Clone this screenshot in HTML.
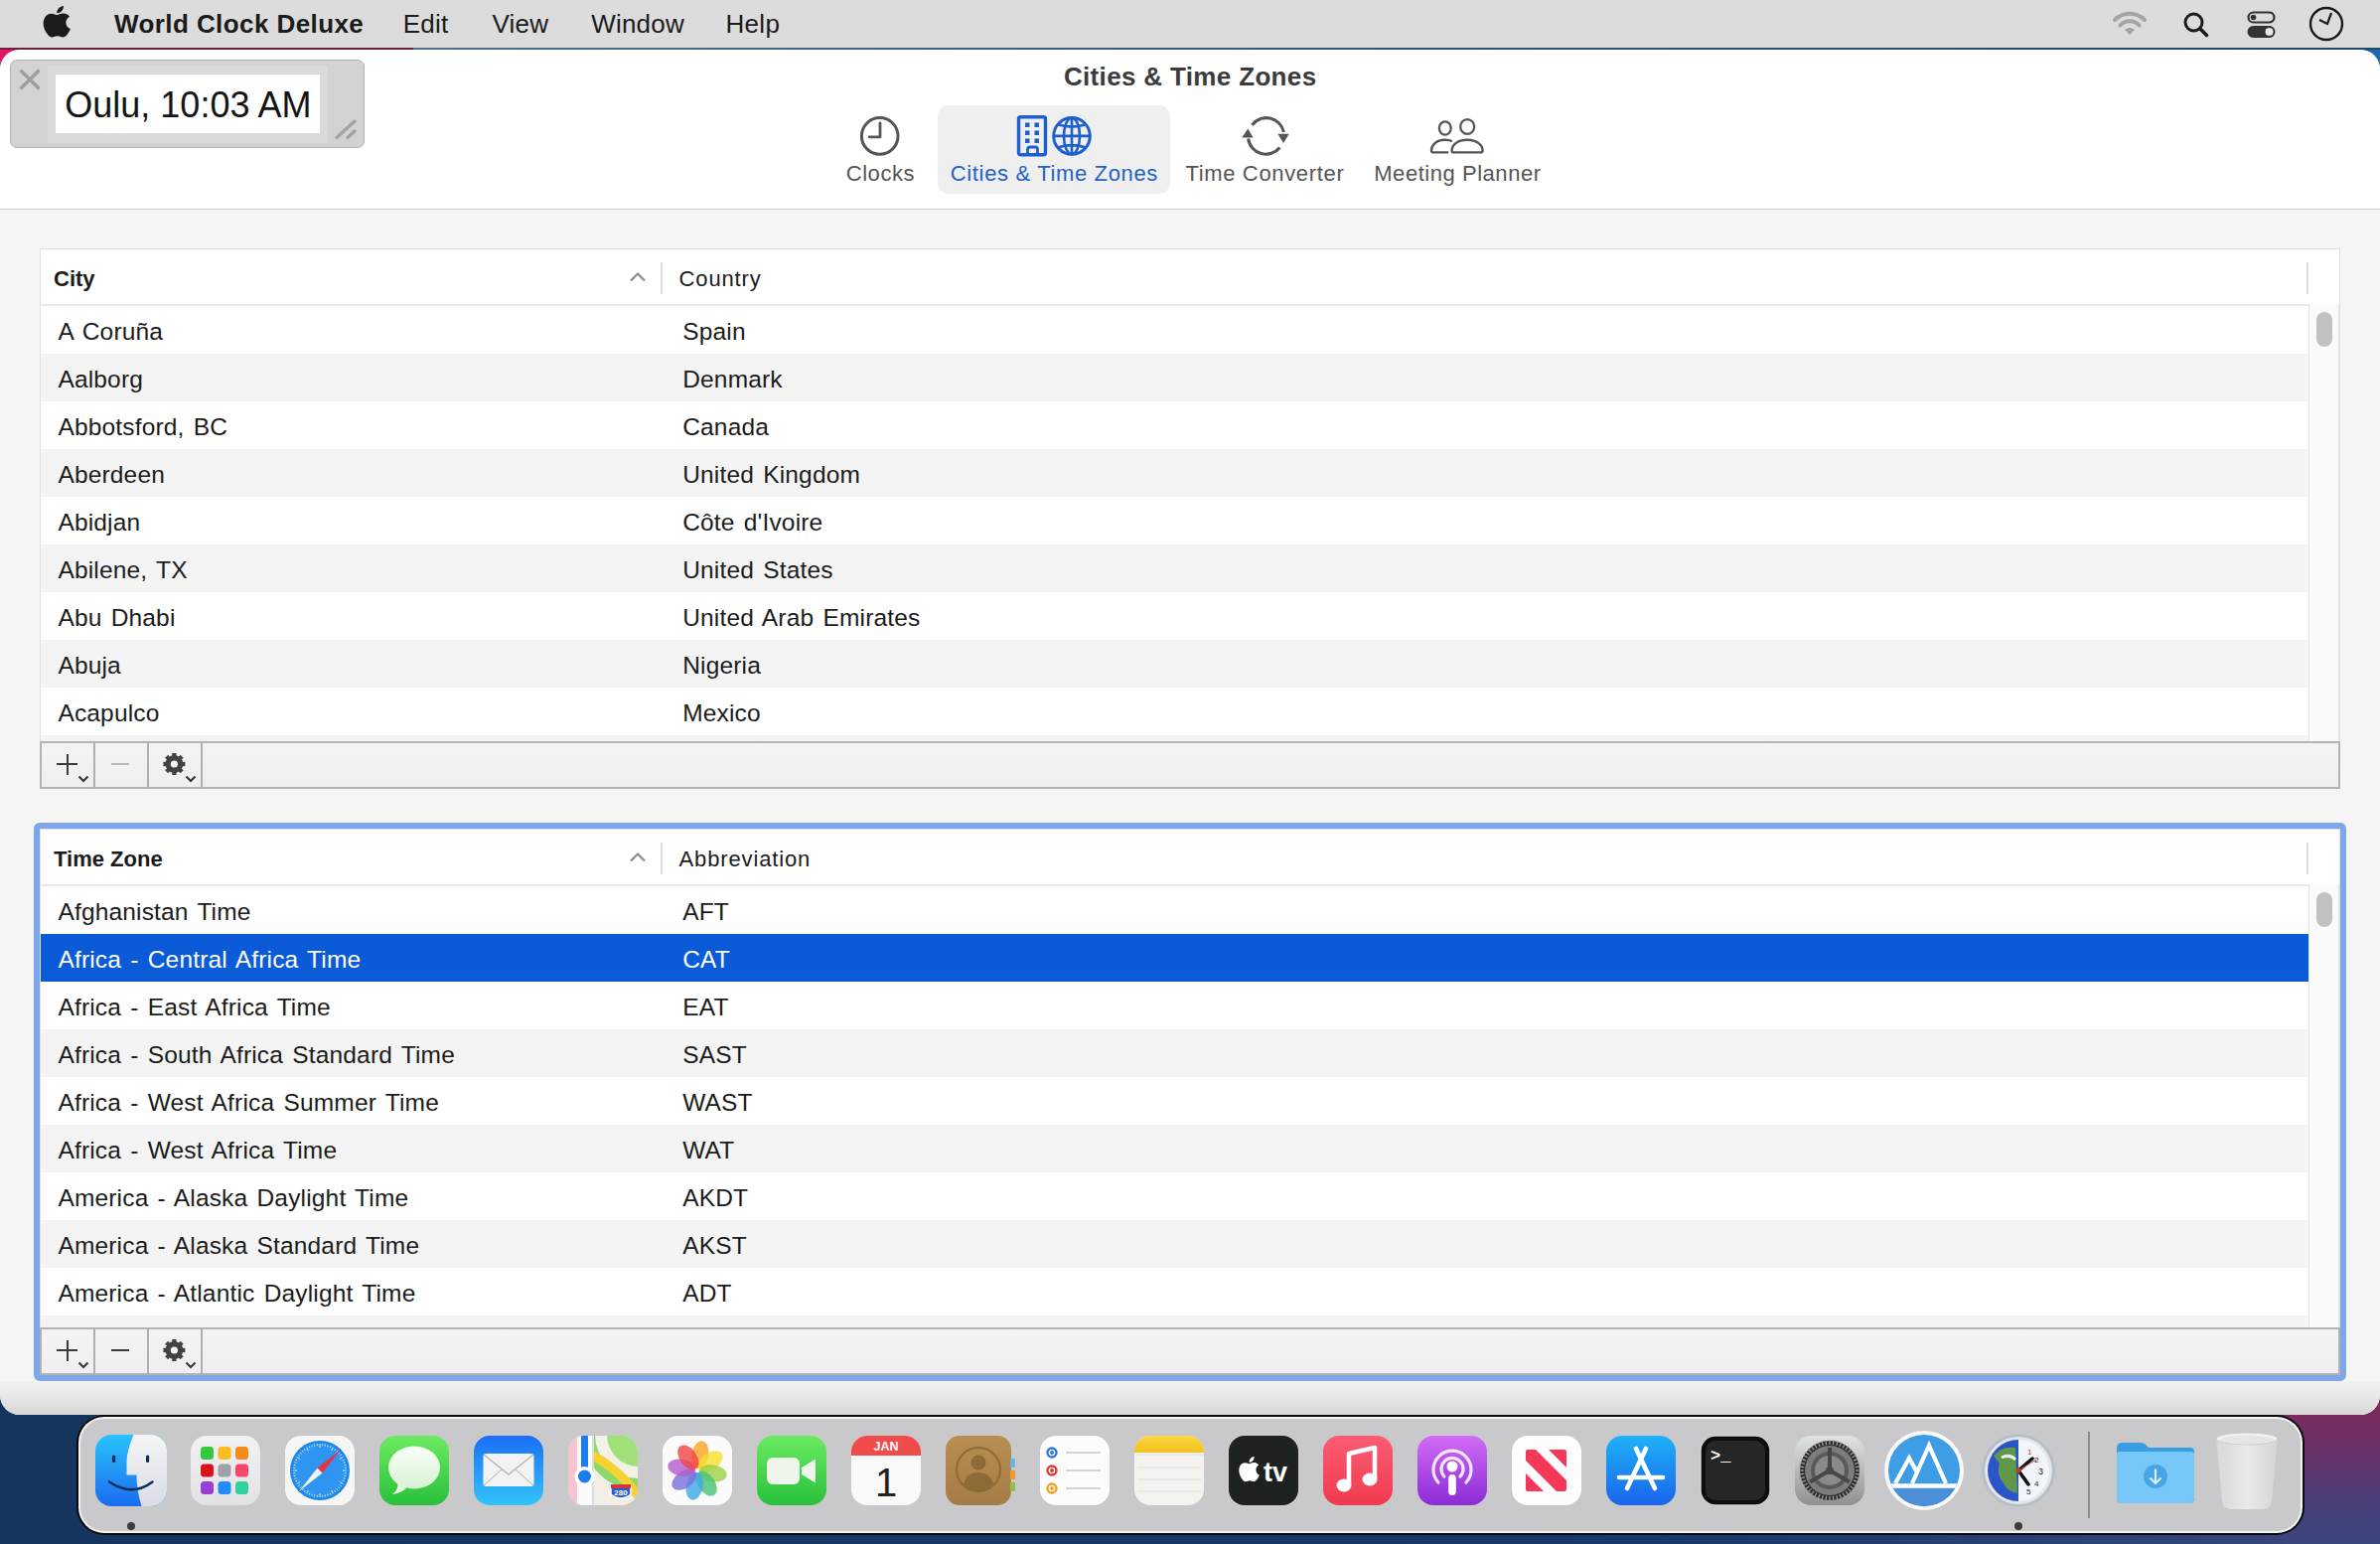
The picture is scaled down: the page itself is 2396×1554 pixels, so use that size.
<!DOCTYPE html><html><head><meta charset="utf-8"><title>World Clock Deluxe</title><style>
*{margin:0;padding:0;box-sizing:border-box}
html,body{width:2396px;height:1554px;overflow:hidden}
body{position:relative;font-family:"Liberation Sans",sans-serif;background:#15355f}
.t{position:absolute;line-height:1;white-space:nowrap}
.a{position:absolute}
svg{position:absolute;overflow:visible}

</style></head><body>
<div class="a" style="left:0px;top:0px;width:2396px;height:1554px;background:linear-gradient(90deg,#15355f 0%,#17386a 70%,#2e4478 90%,#3c4680 100%)"></div>
<div class="a" style="left:2300px;top:1380px;width:96px;height:174px;background:linear-gradient(180deg,#902a5c 0%,#7a2c5e 25%,#64326a 50%,#4a3e78 75%,#3a467e 100%)"></div>
<div class="a" style="left:0px;top:40px;width:700px;height:60px;background:linear-gradient(90deg,#e0186a 0%,#b81f5a 40%,#2a6ab0 60%,#1f6ab0 100%)"></div>
<div class="a" style="left:1700px;top:40px;width:696px;height:60px;background:#1d68b0"></div>
<div class="a" style="left:0px;top:0px;width:2396px;height:48px;background:#dcdcdc"></div>
<div class="a" style="left:0px;top:48px;width:416px;height:2px;background:#6f1d40"></div>
<div class="a" style="left:416px;top:48px;width:1980px;height:2px;background:linear-gradient(90deg,#4f6f8c,#2a5075 60%,#1f4a70)"></div>
<svg style="left:43.6px;top:5.5px" width="26.5" height="31.5" viewBox="2.5 0 19 24" preserveAspectRatio="none"><path fill="#1b1b1b" d="M12.152 6.896c-.948 0-2.415-1.078-3.96-1.04-2.04.027-3.91 1.183-4.961 3.014-2.117 3.675-.546 9.103 1.519 12.09 1.013 1.454 2.208 3.09 3.792 3.039 1.52-.065 2.09-.987 3.935-.987 1.831 0 2.35.987 3.96.948 1.637-.026 2.676-1.48 3.676-2.948 1.156-1.688 1.636-3.325 1.662-3.415-.039-.013-3.182-1.221-3.22-4.857-.026-3.04 2.48-4.494 2.597-4.559-1.429-2.09-3.623-2.324-4.39-2.376-2-.156-3.675 1.09-4.61 1.09zM15.53 3.83c.843-1.012 1.4-2.427 1.245-3.83-1.207.052-2.662.805-3.532 1.818-.78.896-1.454 2.338-1.273 3.714 1.338.104 2.715-.688 3.559-1.701"/></svg>
<div class="t" style="left:115.0px;top:10.9px;font-size:26px;color:#1b1b1b;font-weight:bold;letter-spacing:0.42px">World Clock Deluxe</div>
<div class="t" style="left:405.8px;top:10.9px;font-size:26px;color:#1b1b1b;font-weight:normal;letter-spacing:0.2px">Edit</div>
<div class="t" style="left:495.5px;top:10.9px;font-size:26px;color:#1b1b1b;font-weight:normal;letter-spacing:0.2px">View</div>
<div class="t" style="left:595.2px;top:10.9px;font-size:26px;color:#1b1b1b;font-weight:normal;letter-spacing:0.2px">Window</div>
<div class="t" style="left:730.5px;top:10.9px;font-size:26px;color:#1b1b1b;font-weight:normal;letter-spacing:0.3px">Help</div>
<svg style="left:2126px;top:9px" width="36" height="27" viewBox="0 0 36 27"><path d="M3 11 A21 21 0 0 1 33 11" fill="none" stroke="#a4a4a4" stroke-width="4" stroke-linecap="round"/><path d="M8.5 16.5 A13 13 0 0 1 27.5 16.5" fill="none" stroke="#a4a4a4" stroke-width="4" stroke-linecap="round"/><path d="M13 21 L18 26 L23 21 A7 7 0 0 0 13 21Z" fill="#a4a4a4"/></svg>
<svg style="left:2197px;top:11px" width="28" height="28" viewBox="0 0 28 28"><circle cx="11.5" cy="11.5" r="8.5" fill="none" stroke="#1b1b1b" stroke-width="3"/><path d="M18 18 L24.5 24.5" stroke="#1b1b1b" stroke-width="3.5" stroke-linecap="round"/></svg>
<svg style="left:2262px;top:11px" width="30" height="28" viewBox="0 0 30 28"><rect x="1.5" y="1.5" width="26" height="10" rx="5" fill="none" stroke="#333" stroke-width="2.2"/><circle cx="6.5" cy="6.5" r="2.8" fill="#333"/><rect x="0.5" y="15" width="28" height="12" rx="6" fill="#333"/><circle cx="22.5" cy="21" r="4" fill="#e8e8e8"/></svg>
<svg style="left:2324px;top:6px" width="36" height="36" viewBox="0 0 36 36"><circle cx="18" cy="18" r="16" fill="none" stroke="#1b1b1b" stroke-width="2.4"/><path d="M23 7 L19 18 L11 14" fill="none" stroke="#1b1b1b" stroke-width="2.2"/></svg>
<div class="a" style="left:0;top:50px;width:2396px;height:1374px;border-radius:20px;overflow:hidden;background:#f5f5f5">
<div class="a" style="left:0;top:0;width:2396px;height:160px;background:#fff"></div>
<div class="a" style="left:0;top:160px;width:2396px;height:1px;background:#cbcbcb"></div>
<div class="a" style="left:0;top:1340px;width:2396px;height:34px;background:linear-gradient(180deg,#f0f0f0 0%,#ececec 30%,#d7d7d7 100%)"></div>
</div>
<div class="a" style="left:10px;top:60px;width:357px;height:89px;border-radius:7px;background:#d2d2d2;border:1.5px solid #b2b2b2"></div>
<div class="a" style="left:48px;top:66px;width:282px;height:78px;background:#dadada"></div>
<div class="a" style="left:56px;top:75px;width:266px;height:59px;background:#ffffff"></div>
<div class="t" style="left:65.3px;top:87.8px;font-size:36px;color:#141414;font-weight:normal;letter-spacing:0px">Oulu, 10:03 AM</div>
<svg style="left:18px;top:68px" width="24" height="24" viewBox="0 0 24 24"><path d="M3.5 3.5 L20.5 20.5 M20.5 3.5 L3.5 20.5" stroke="#9c9c9c" stroke-width="3.2" stroke-linecap="round"/></svg>
<svg style="left:334px;top:117px" width="28" height="26" viewBox="0 0 28 26"><path d="M5 21.5 L23 5 M16 21.5 L23 15" stroke="#a2a2a2" stroke-width="3.2" stroke-linecap="round"/></svg>
<div class="t" style="left:998.2px;width:400px;text-align:center;top:63.8px;font-size:26px;color:#3b3b3b;font-weight:bold;letter-spacing:0.34px">Cities &amp; Time Zones</div>
<div class="a" style="left:944px;top:106px;width:234px;height:89px;border-radius:11px;background:#efefef"></div>
<svg style="left:860px;top:111px" width="52" height="52" viewBox="0 0 52 52"><circle cx="25.7" cy="25.9" r="18.3" fill="none" stroke="#555" stroke-width="3"/><path d="M26 13 V26.8 H15.2" fill="none" stroke="#555" stroke-width="2.8" stroke-linecap="round" stroke-linejoin="round"/></svg>
<div class="t" style="left:686.4px;width:400px;text-align:center;top:163.9px;font-size:22px;color:#555555;font-weight:normal;letter-spacing:0.54px">Clocks</div>
<svg style="left:1020px;top:112px" width="90" height="50" viewBox="0 0 90 50"><rect x="5.5" y="5.8" width="27" height="38" rx="2" fill="none" stroke="#1d5fcf" stroke-width="3.4"/><rect x="12" y="11.5" width="4.5" height="4.5" fill="#1d5fcf"/><rect x="21.5" y="11.5" width="4.5" height="4.5" fill="#1d5fcf"/><rect x="12" y="19.5" width="4.5" height="4.5" fill="#1d5fcf"/><rect x="21.5" y="19.5" width="4.5" height="4.5" fill="#1d5fcf"/><rect x="12" y="27.5" width="4.5" height="4.5" fill="#1d5fcf"/><rect x="21.5" y="27.5" width="4.5" height="4.5" fill="#1d5fcf"/><path d="M14.5 43.5 V38.5 Q14.5 36 17 36 H22 Q24.5 36 24.5 38.5 V43.5" fill="none" stroke="#1d5fcf" stroke-width="2.8"/><circle cx="59" cy="24.9" r="18.3" fill="none" stroke="#1d5fcf" stroke-width="3"/><ellipse cx="59" cy="24.9" rx="8" ry="18.3" fill="none" stroke="#1d5fcf" stroke-width="2.6"/><path d="M59 6.6 V43.2 M40.7 24.9 H77.3 M45.2 13.3 Q59 18 72.8 13.3 M45.2 36.5 Q59 31.8 72.8 36.5" fill="none" stroke="#1d5fcf" stroke-width="2.6"/></svg>
<div class="t" style="left:861.4px;width:400px;text-align:center;top:163.9px;font-size:22px;color:#1f62c9;font-weight:normal;letter-spacing:0.65px">Cities &amp; Time Zones</div>
<svg style="left:1240px;top:106px" width="70" height="60" viewBox="0 0 70 60"><path d="M20.4 19.8 A18 18 0 0 1 52.4 27" fill="none" stroke="#555" stroke-width="3"/><path d="M48.4 42.5 A18 18 0 0 1 16.6 33.5" fill="none" stroke="#555" stroke-width="3"/><path d="M46.4 28.8 L57.7 28.8 L52.1 38 Z" fill="#555"/><path d="M10.3 32.6 L21.6 32.6 L16.3 23.6 Z" fill="#555"/></svg>
<div class="t" style="left:1073.4px;width:400px;text-align:center;top:163.9px;font-size:22px;color:#555555;font-weight:normal;letter-spacing:0.66px">Time Converter</div>
<svg style="left:1430px;top:110px" width="80" height="52" viewBox="0 0 80 52"><ellipse cx="24.8" cy="19" rx="5.9" ry="6.7" fill="none" stroke="#555" stroke-width="2.3"/><ellipse cx="47.2" cy="17.5" rx="7" ry="7.4" fill="none" stroke="#555" stroke-width="2.3"/><path d="M31.8 32.2 C29.5 31.1 27 30.8 24.5 30.8 C16 30.8 11 36 11 41.5 Q11 43.4 13.2 43.4 H28.2" fill="none" stroke="#555" stroke-width="2.4"/><path d="M47 30.8 C37 30.8 31.6 36 31.6 41.5 Q31.6 43.4 33.6 43.4 H60.6 Q62.6 43.4 62.6 41.5 C62.6 36 57 30.8 47 30.8Z" fill="none" stroke="#555" stroke-width="2.4"/></svg>
<div class="t" style="left:1267.4px;width:400px;text-align:center;top:163.9px;font-size:22px;color:#555555;font-weight:normal;letter-spacing:0.54px">Meeting Planner</div>
<div class="a" style="left:40px;top:250px;width:2316px;height:544px;background:#fff;border:1px solid #e0e0e0;border-bottom:none"></div>
<div class="a" style="left:41px;top:306px;width:2283px;height:2px;background:#e9e9e9"></div>
<div class="t" style="left:54.0px;top:269.8px;font-size:22px;color:#1b1b1b;font-weight:bold;">City</div>
<svg style="left:633px;top:272.5px" width="18" height="12" viewBox="0 0 18 12"><path d="M2 9.5 L9 2.5 L16 9.5" fill="none" stroke="#8a8a8a" stroke-width="2.2"/></svg>
<div class="a" style="left:665px;top:264px;width:2px;height:32px;background:#dedede"></div>
<div class="t" style="left:683.6px;top:269.8px;font-size:22px;color:#1b1b1b;font-weight:normal;letter-spacing:0.85px">Country</div>
<div class="a" style="left:2322px;top:264px;width:2px;height:32px;background:#dedede"></div>
<div class="a" style="left:41px;top:308px;width:2283px;height:48px;background:#ffffff"></div>
<div class="t" style="left:58.4px;top:322.1px;font-size:24.5px;color:#1b1b1b;font-weight:normal;letter-spacing:0.17px;word-spacing:2.2px">A Coruña</div>
<div class="t" style="left:687.2px;top:322.1px;font-size:24.5px;color:#1b1b1b;font-weight:normal;letter-spacing:0.17px;word-spacing:2.2px">Spain</div>
<div class="a" style="left:41px;top:356px;width:2283px;height:48px;background:#f4f4f4"></div>
<div class="t" style="left:58.4px;top:370.1px;font-size:24.5px;color:#1b1b1b;font-weight:normal;letter-spacing:0.17px;word-spacing:2.2px">Aalborg</div>
<div class="t" style="left:687.2px;top:370.1px;font-size:24.5px;color:#1b1b1b;font-weight:normal;letter-spacing:0.17px;word-spacing:2.2px">Denmark</div>
<div class="a" style="left:41px;top:404px;width:2283px;height:48px;background:#ffffff"></div>
<div class="t" style="left:58.4px;top:418.1px;font-size:24.5px;color:#1b1b1b;font-weight:normal;letter-spacing:0.17px;word-spacing:2.2px">Abbotsford, BC</div>
<div class="t" style="left:687.2px;top:418.1px;font-size:24.5px;color:#1b1b1b;font-weight:normal;letter-spacing:0.17px;word-spacing:2.2px">Canada</div>
<div class="a" style="left:41px;top:452px;width:2283px;height:48px;background:#f4f4f4"></div>
<div class="t" style="left:58.4px;top:466.1px;font-size:24.5px;color:#1b1b1b;font-weight:normal;letter-spacing:0.17px;word-spacing:2.2px">Aberdeen</div>
<div class="t" style="left:687.2px;top:466.1px;font-size:24.5px;color:#1b1b1b;font-weight:normal;letter-spacing:0.17px;word-spacing:2.2px">United Kingdom</div>
<div class="a" style="left:41px;top:500px;width:2283px;height:48px;background:#ffffff"></div>
<div class="t" style="left:58.4px;top:514.1px;font-size:24.5px;color:#1b1b1b;font-weight:normal;letter-spacing:0.17px;word-spacing:2.2px">Abidjan</div>
<div class="t" style="left:687.2px;top:514.1px;font-size:24.5px;color:#1b1b1b;font-weight:normal;letter-spacing:0.17px;word-spacing:2.2px">Côte d'Ivoire</div>
<div class="a" style="left:41px;top:548px;width:2283px;height:48px;background:#f4f4f4"></div>
<div class="t" style="left:58.4px;top:562.1px;font-size:24.5px;color:#1b1b1b;font-weight:normal;letter-spacing:0.17px;word-spacing:2.2px">Abilene, TX</div>
<div class="t" style="left:687.2px;top:562.1px;font-size:24.5px;color:#1b1b1b;font-weight:normal;letter-spacing:0.17px;word-spacing:2.2px">United States</div>
<div class="a" style="left:41px;top:596px;width:2283px;height:48px;background:#ffffff"></div>
<div class="t" style="left:58.4px;top:610.1px;font-size:24.5px;color:#1b1b1b;font-weight:normal;letter-spacing:0.17px;word-spacing:2.2px">Abu Dhabi</div>
<div class="t" style="left:687.2px;top:610.1px;font-size:24.5px;color:#1b1b1b;font-weight:normal;letter-spacing:0.17px;word-spacing:2.2px">United Arab Emirates</div>
<div class="a" style="left:41px;top:644px;width:2283px;height:48px;background:#f4f4f4"></div>
<div class="t" style="left:58.4px;top:658.1px;font-size:24.5px;color:#1b1b1b;font-weight:normal;letter-spacing:0.17px;word-spacing:2.2px">Abuja</div>
<div class="t" style="left:687.2px;top:658.1px;font-size:24.5px;color:#1b1b1b;font-weight:normal;letter-spacing:0.17px;word-spacing:2.2px">Nigeria</div>
<div class="a" style="left:41px;top:692px;width:2283px;height:48px;background:#ffffff"></div>
<div class="t" style="left:58.4px;top:706.1px;font-size:24.5px;color:#1b1b1b;font-weight:normal;letter-spacing:0.17px;word-spacing:2.2px">Acapulco</div>
<div class="t" style="left:687.2px;top:706.1px;font-size:24.5px;color:#1b1b1b;font-weight:normal;letter-spacing:0.17px;word-spacing:2.2px">Mexico</div>
<div class="a" style="left:41px;top:740px;width:2283px;height:6px;background:#f4f4f4"></div>
<div class="a" style="left:2324px;top:306px;width:31px;height:440px;background:#fafafa;border-left:1px solid #e6e6e6;border-right:1px solid #e6e6e6"></div>
<div class="a" style="left:2332px;top:314px;width:16px;height:35px;background:#c1c1c1;border-radius:8px"></div>
<div class="a" style="left:40px;top:746px;width:2316px;height:48px;background:linear-gradient(180deg,#f4f4f4,#efefef);border:2px solid #b3b3b3"></div>
<div class="a" style="left:94px;top:746px;width:2px;height:48px;background:#b0b0b0"></div>
<div class="a" style="left:148px;top:746px;width:2px;height:48px;background:#b0b0b0"></div>
<div class="a" style="left:202px;top:746px;width:2px;height:48px;background:#b0b0b0"></div>
<div class="a" style="left:57px;top:768px;width:21px;height:2px;background:#3a3a3a"></div>
<div class="a" style="left:66.5px;top:758.5px;width:2px;height:21px;background:#3a3a3a"></div>
<svg style="left:78px;top:780px" width="12" height="8" viewBox="0 0 12 8"><path d="M1.5 1.5 L6 6 L10.5 1.5" fill="none" stroke="#333" stroke-width="2"/></svg>
<div class="a" style="left:112px;top:768px;width:18px;height:2px;background:#b9b9b9"></div>
<svg style="left:0;top:0" width="2396" height="1554" viewBox="0 0 2396 1554"><path d="M183.35 766.97 L186.38 766.77 L186.38 771.23 L183.35 771.03 L182.45 773.18 L184.74 775.19 L181.59 778.34 L179.58 776.05 L177.43 776.95 L177.63 779.98 L173.17 779.98 L173.37 776.95 L171.22 776.05 L169.21 778.34 L166.06 775.19 L168.35 773.18 L167.45 771.03 L164.42 771.23 L164.42 766.77 L167.45 766.97 L168.35 764.82 L166.06 762.81 L169.21 759.66 L171.22 761.95 L173.37 761.05 L173.17 758.02 L177.63 758.02 L177.43 761.05 L179.58 761.95 L181.59 759.66 L184.74 762.81 L182.45 764.82Z" fill="#424242"/><circle cx="175.4" cy="769" r="9" fill="#424242"/><circle cx="175.4" cy="769" r="3.6" fill="#f3f3f3"/></svg>
<svg style="left:186px;top:780px" width="12" height="8" viewBox="0 0 12 8"><path d="M1.5 1.5 L6 6 L10.5 1.5" fill="none" stroke="#333" stroke-width="2"/></svg>
<div class="a" style="left:40px;top:834px;width:2316px;height:550px;background:#fff;border:1px solid #e0e0e0;border-bottom:none"></div>
<div class="a" style="left:41px;top:890px;width:2283px;height:2px;background:#e9e9e9"></div>
<div class="t" style="left:54.0px;top:853.8px;font-size:22px;color:#1b1b1b;font-weight:bold;">Time Zone</div>
<svg style="left:633px;top:856.5px" width="18" height="12" viewBox="0 0 18 12"><path d="M2 9.5 L9 2.5 L16 9.5" fill="none" stroke="#8a8a8a" stroke-width="2.2"/></svg>
<div class="a" style="left:665px;top:848px;width:2px;height:32px;background:#dedede"></div>
<div class="t" style="left:683.6px;top:853.8px;font-size:22px;color:#1b1b1b;font-weight:normal;letter-spacing:0.85px">Abbreviation</div>
<div class="a" style="left:2322px;top:848px;width:2px;height:32px;background:#dedede"></div>
<div class="a" style="left:41px;top:892px;width:2283px;height:48px;background:#ffffff"></div>
<div class="t" style="left:58.4px;top:906.1px;font-size:24.5px;color:#1b1b1b;font-weight:normal;letter-spacing:0.17px;word-spacing:2.2px">Afghanistan Time</div>
<div class="t" style="left:687.2px;top:906.1px;font-size:24.5px;color:#1b1b1b;font-weight:normal;letter-spacing:0.17px;word-spacing:2.2px">AFT</div>
<div class="a" style="left:41px;top:940px;width:2283px;height:48px;background:#0b5bd9"></div>
<div class="t" style="left:58.4px;top:954.1px;font-size:24.5px;color:#ffffff;font-weight:normal;letter-spacing:0.17px;word-spacing:2.2px">Africa - Central Africa Time</div>
<div class="t" style="left:687.2px;top:954.1px;font-size:24.5px;color:#ffffff;font-weight:normal;letter-spacing:0.17px;word-spacing:2.2px">CAT</div>
<div class="a" style="left:41px;top:988px;width:2283px;height:48px;background:#ffffff"></div>
<div class="t" style="left:58.4px;top:1002.1px;font-size:24.5px;color:#1b1b1b;font-weight:normal;letter-spacing:0.17px;word-spacing:2.2px">Africa - East Africa Time</div>
<div class="t" style="left:687.2px;top:1002.1px;font-size:24.5px;color:#1b1b1b;font-weight:normal;letter-spacing:0.17px;word-spacing:2.2px">EAT</div>
<div class="a" style="left:41px;top:1036px;width:2283px;height:48px;background:#f4f4f4"></div>
<div class="t" style="left:58.4px;top:1050.1px;font-size:24.5px;color:#1b1b1b;font-weight:normal;letter-spacing:0.17px;word-spacing:2.2px">Africa - South Africa Standard Time</div>
<div class="t" style="left:687.2px;top:1050.1px;font-size:24.5px;color:#1b1b1b;font-weight:normal;letter-spacing:0.17px;word-spacing:2.2px">SAST</div>
<div class="a" style="left:41px;top:1084px;width:2283px;height:48px;background:#ffffff"></div>
<div class="t" style="left:58.4px;top:1098.1px;font-size:24.5px;color:#1b1b1b;font-weight:normal;letter-spacing:0.17px;word-spacing:2.2px">Africa - West Africa Summer Time</div>
<div class="t" style="left:687.2px;top:1098.1px;font-size:24.5px;color:#1b1b1b;font-weight:normal;letter-spacing:0.17px;word-spacing:2.2px">WAST</div>
<div class="a" style="left:41px;top:1132px;width:2283px;height:48px;background:#f4f4f4"></div>
<div class="t" style="left:58.4px;top:1146.1px;font-size:24.5px;color:#1b1b1b;font-weight:normal;letter-spacing:0.17px;word-spacing:2.2px">Africa - West Africa Time</div>
<div class="t" style="left:687.2px;top:1146.1px;font-size:24.5px;color:#1b1b1b;font-weight:normal;letter-spacing:0.17px;word-spacing:2.2px">WAT</div>
<div class="a" style="left:41px;top:1180px;width:2283px;height:48px;background:#ffffff"></div>
<div class="t" style="left:58.4px;top:1194.1px;font-size:24.5px;color:#1b1b1b;font-weight:normal;letter-spacing:0.17px;word-spacing:2.2px">America - Alaska Daylight Time</div>
<div class="t" style="left:687.2px;top:1194.1px;font-size:24.5px;color:#1b1b1b;font-weight:normal;letter-spacing:0.17px;word-spacing:2.2px">AKDT</div>
<div class="a" style="left:41px;top:1228px;width:2283px;height:48px;background:#f4f4f4"></div>
<div class="t" style="left:58.4px;top:1242.1px;font-size:24.5px;color:#1b1b1b;font-weight:normal;letter-spacing:0.17px;word-spacing:2.2px">America - Alaska Standard Time</div>
<div class="t" style="left:687.2px;top:1242.1px;font-size:24.5px;color:#1b1b1b;font-weight:normal;letter-spacing:0.17px;word-spacing:2.2px">AKST</div>
<div class="a" style="left:41px;top:1276px;width:2283px;height:48px;background:#ffffff"></div>
<div class="t" style="left:58.4px;top:1290.1px;font-size:24.5px;color:#1b1b1b;font-weight:normal;letter-spacing:0.17px;word-spacing:2.2px">America - Atlantic Daylight Time</div>
<div class="t" style="left:687.2px;top:1290.1px;font-size:24.5px;color:#1b1b1b;font-weight:normal;letter-spacing:0.17px;word-spacing:2.2px">ADT</div>
<div class="a" style="left:41px;top:1324px;width:2283px;height:12px;background:#f4f4f4"></div>
<div class="a" style="left:2324px;top:890px;width:31px;height:446px;background:#fafafa;border-left:1px solid #e6e6e6;border-right:1px solid #e6e6e6"></div>
<div class="a" style="left:2332px;top:898px;width:16px;height:35px;background:#c1c1c1;border-radius:8px"></div>
<div class="a" style="left:40px;top:1336px;width:2316px;height:48px;background:linear-gradient(180deg,#f4f4f4,#efefef);border:2px solid #b3b3b3"></div>
<div class="a" style="left:94px;top:1336px;width:2px;height:48px;background:#b0b0b0"></div>
<div class="a" style="left:148px;top:1336px;width:2px;height:48px;background:#b0b0b0"></div>
<div class="a" style="left:202px;top:1336px;width:2px;height:48px;background:#b0b0b0"></div>
<div class="a" style="left:57px;top:1358px;width:21px;height:2px;background:#3a3a3a"></div>
<div class="a" style="left:66.5px;top:1348.5px;width:2px;height:21px;background:#3a3a3a"></div>
<svg style="left:78px;top:1370px" width="12" height="8" viewBox="0 0 12 8"><path d="M1.5 1.5 L6 6 L10.5 1.5" fill="none" stroke="#333" stroke-width="2"/></svg>
<div class="a" style="left:112px;top:1358px;width:18px;height:2px;background:#3a3a3a"></div>
<svg style="left:0;top:0" width="2396" height="1554" viewBox="0 0 2396 1554"><path d="M183.35 1356.97 L186.38 1356.77 L186.38 1361.23 L183.35 1361.03 L182.45 1363.18 L184.74 1365.19 L181.59 1368.34 L179.58 1366.05 L177.43 1366.95 L177.63 1369.98 L173.17 1369.98 L173.37 1366.95 L171.22 1366.05 L169.21 1368.34 L166.06 1365.19 L168.35 1363.18 L167.45 1361.03 L164.42 1361.23 L164.42 1356.77 L167.45 1356.97 L168.35 1354.82 L166.06 1352.81 L169.21 1349.66 L171.22 1351.95 L173.37 1351.05 L173.17 1348.02 L177.63 1348.02 L177.43 1351.05 L179.58 1351.95 L181.59 1349.66 L184.74 1352.81 L182.45 1354.82Z" fill="#424242"/><circle cx="175.4" cy="1359" r="9" fill="#424242"/><circle cx="175.4" cy="1359" r="3.6" fill="#f3f3f3"/></svg>
<svg style="left:186px;top:1370px" width="12" height="8" viewBox="0 0 12 8"><path d="M1.5 1.5 L6 6 L10.5 1.5" fill="none" stroke="#333" stroke-width="2"/></svg>
<div class="a" style="left:34px;top:828px;width:2328px;height:562px;border:6px solid #7fa6e8;border-radius:6px"></div>
<div class="a" style="left:77px;top:1424px;width:2243px;height:121px;border-radius:28px;background:#0a0a0a"></div>
<div class="a" style="left:79px;top:1426px;width:2239px;height:117px;border-radius:26px;background:#f4f4f4"></div>
<div class="a" style="left:81px;top:1428px;width:2235px;height:113px;border-radius:24px;background:#c9c9cb"></div>
<div class="a" style="left:96px;top:1444px;width:72px;height:72px"><svg style="left:0px;top:0px" width="72" height="72" viewBox="0 0 72 72"><defs><linearGradient id="fb" x1="0" y1="0" x2="0" y2="1"><stop offset="0" stop-color="#2ac3fb"/><stop offset="1" stop-color="#1a6cf0"/></linearGradient></defs><defs><linearGradient id="fw" x1="0" y1="0" x2="0" y2="1"><stop offset="0" stop-color="#f4f5f7"/><stop offset="1" stop-color="#d9dde4"/></linearGradient></defs><clipPath id="fc"><rect x="0" y="0" width="72" height="72" rx="16"/></clipPath><g clip-path="url(#fc)"><rect x="0" y="0" width="72" height="72" fill="url(#fb)"/><path d="M38.5 0 C34 11 31.5 20 31.5 28 L31.5 40.5 L41.5 40.5 C41.5 52 43.5 62 46.5 72 L72 72 L72 0 Z" fill="url(#fw)"/></g><rect x="17" y="20.5" width="3.2" height="7.5" rx="1.6" fill="#0e2a55"/><rect x="51" y="20.5" width="3.2" height="7.5" rx="1.6" fill="#0e2a55"/><path d="M14 47.5 Q37 63 57.5 47.5" fill="none" stroke="#0e2a55" stroke-width="2.4" stroke-linecap="round"/></svg></div>
<div class="a" style="left:191px;top:1444px;width:72px;height:72px"><svg style="left:0px;top:0px" width="72" height="72" viewBox="0 0 72 72"><defs><linearGradient id="lpg" x1="0" y1="0" x2="0" y2="1"><stop offset="0" stop-color="#f2f2f4"/><stop offset="1" stop-color="#e2e2e4"/></linearGradient></defs><rect x="1" y="1" width="70" height="70" rx="16" fill="url(#lpg)"/><rect x="11.0" y="12.0" width="13" height="13" rx="3.5" fill="#35c93e"/><rect x="28.5" y="12.0" width="13" height="13" rx="3.5" fill="#fbbd1d"/><rect x="46.0" y="12.0" width="13" height="13" rx="3.5" fill="#f98a1a"/><rect x="11.0" y="29.5" width="13" height="13" rx="3.5" fill="#d8121e"/><rect x="28.5" y="29.5" width="13" height="13" rx="3.5" fill="#9ea1a5"/><rect x="46.0" y="29.5" width="13" height="13" rx="3.5" fill="#f8466a"/><rect x="11.0" y="47.0" width="13" height="13" rx="3.5" fill="#9a3ed6"/><rect x="28.5" y="47.0" width="13" height="13" rx="3.5" fill="#1f8df5"/><rect x="46.0" y="47.0" width="13" height="13" rx="3.5" fill="#2fd1a0"/></svg></div>
<div class="a" style="left:286px;top:1444px;width:72px;height:72px"><svg style="left:0px;top:0px" width="72" height="72" viewBox="0 0 72 72"><rect x="1" y="1" width="70" height="70" rx="16" fill="#f6f6f6"/><circle cx="36" cy="36" r="30" fill="#1e88ea"/><circle cx="36" cy="36" r="27" fill="#2e95f0"/><path d="M63.00 36.00 L59.00 36.00" stroke="#d8ecff" stroke-width="0.9"/><path d="M62.85 38.82 L60.86 38.61" stroke="#d8ecff" stroke-width="0.9"/><path d="M62.41 41.61 L60.45 41.20" stroke="#d8ecff" stroke-width="0.9"/><path d="M61.68 44.34 L59.78 43.73" stroke="#d8ecff" stroke-width="0.9"/><path d="M60.67 46.98 L58.84 46.17" stroke="#d8ecff" stroke-width="0.9"/><path d="M59.38 49.50 L55.92 47.50" stroke="#d8ecff" stroke-width="0.9"/><path d="M57.84 51.87 L56.23 50.69" stroke="#d8ecff" stroke-width="0.9"/><path d="M56.06 54.07 L54.58 52.73" stroke="#d8ecff" stroke-width="0.9"/><path d="M54.07 56.06 L52.73 54.58" stroke="#d8ecff" stroke-width="0.9"/><path d="M51.87 57.84 L50.69 56.23" stroke="#d8ecff" stroke-width="0.9"/><path d="M49.50 59.38 L47.50 55.92" stroke="#d8ecff" stroke-width="0.9"/><path d="M46.98 60.67 L46.17 58.84" stroke="#d8ecff" stroke-width="0.9"/><path d="M44.34 61.68 L43.73 59.78" stroke="#d8ecff" stroke-width="0.9"/><path d="M41.61 62.41 L41.20 60.45" stroke="#d8ecff" stroke-width="0.9"/><path d="M38.82 62.85 L38.61 60.86" stroke="#d8ecff" stroke-width="0.9"/><path d="M36.00 63.00 L36.00 59.00" stroke="#d8ecff" stroke-width="0.9"/><path d="M33.18 62.85 L33.39 60.86" stroke="#d8ecff" stroke-width="0.9"/><path d="M30.39 62.41 L30.80 60.45" stroke="#d8ecff" stroke-width="0.9"/><path d="M27.66 61.68 L28.27 59.78" stroke="#d8ecff" stroke-width="0.9"/><path d="M25.02 60.67 L25.83 58.84" stroke="#d8ecff" stroke-width="0.9"/><path d="M22.50 59.38 L24.50 55.92" stroke="#d8ecff" stroke-width="0.9"/><path d="M20.13 57.84 L21.31 56.23" stroke="#d8ecff" stroke-width="0.9"/><path d="M17.93 56.06 L19.27 54.58" stroke="#d8ecff" stroke-width="0.9"/><path d="M15.94 54.07 L17.42 52.73" stroke="#d8ecff" stroke-width="0.9"/><path d="M14.16 51.87 L15.77 50.69" stroke="#d8ecff" stroke-width="0.9"/><path d="M12.62 49.50 L16.08 47.50" stroke="#d8ecff" stroke-width="0.9"/><path d="M11.33 46.98 L13.16 46.17" stroke="#d8ecff" stroke-width="0.9"/><path d="M10.32 44.34 L12.22 43.73" stroke="#d8ecff" stroke-width="0.9"/><path d="M9.59 41.61 L11.55 41.20" stroke="#d8ecff" stroke-width="0.9"/><path d="M9.15 38.82 L11.14 38.61" stroke="#d8ecff" stroke-width="0.9"/><path d="M9.00 36.00 L13.00 36.00" stroke="#d8ecff" stroke-width="0.9"/><path d="M9.15 33.18 L11.14 33.39" stroke="#d8ecff" stroke-width="0.9"/><path d="M9.59 30.39 L11.55 30.80" stroke="#d8ecff" stroke-width="0.9"/><path d="M10.32 27.66 L12.22 28.27" stroke="#d8ecff" stroke-width="0.9"/><path d="M11.33 25.02 L13.16 25.83" stroke="#d8ecff" stroke-width="0.9"/><path d="M12.62 22.50 L16.08 24.50" stroke="#d8ecff" stroke-width="0.9"/><path d="M14.16 20.13 L15.77 21.31" stroke="#d8ecff" stroke-width="0.9"/><path d="M15.94 17.93 L17.42 19.27" stroke="#d8ecff" stroke-width="0.9"/><path d="M17.93 15.94 L19.27 17.42" stroke="#d8ecff" stroke-width="0.9"/><path d="M20.13 14.16 L21.31 15.77" stroke="#d8ecff" stroke-width="0.9"/><path d="M22.50 12.62 L24.50 16.08" stroke="#d8ecff" stroke-width="0.9"/><path d="M25.02 11.33 L25.83 13.16" stroke="#d8ecff" stroke-width="0.9"/><path d="M27.66 10.32 L28.27 12.22" stroke="#d8ecff" stroke-width="0.9"/><path d="M30.39 9.59 L30.80 11.55" stroke="#d8ecff" stroke-width="0.9"/><path d="M33.18 9.15 L33.39 11.14" stroke="#d8ecff" stroke-width="0.9"/><path d="M36.00 9.00 L36.00 13.00" stroke="#d8ecff" stroke-width="0.9"/><path d="M38.82 9.15 L38.61 11.14" stroke="#d8ecff" stroke-width="0.9"/><path d="M41.61 9.59 L41.20 11.55" stroke="#d8ecff" stroke-width="0.9"/><path d="M44.34 10.32 L43.73 12.22" stroke="#d8ecff" stroke-width="0.9"/><path d="M46.98 11.33 L46.17 13.16" stroke="#d8ecff" stroke-width="0.9"/><path d="M49.50 12.62 L47.50 16.08" stroke="#d8ecff" stroke-width="0.9"/><path d="M51.87 14.16 L50.69 15.77" stroke="#d8ecff" stroke-width="0.9"/><path d="M54.07 15.94 L52.73 17.42" stroke="#d8ecff" stroke-width="0.9"/><path d="M56.06 17.93 L54.58 19.27" stroke="#d8ecff" stroke-width="0.9"/><path d="M57.84 20.13 L56.23 21.31" stroke="#d8ecff" stroke-width="0.9"/><path d="M59.38 22.50 L55.92 24.50" stroke="#d8ecff" stroke-width="0.9"/><path d="M60.67 25.02 L58.84 25.83" stroke="#d8ecff" stroke-width="0.9"/><path d="M61.68 27.66 L59.78 28.27" stroke="#d8ecff" stroke-width="0.9"/><path d="M62.41 30.39 L60.45 30.80" stroke="#d8ecff" stroke-width="0.9"/><path d="M62.85 33.18 L60.86 33.39" stroke="#d8ecff" stroke-width="0.9"/><path d="M57 15 L33.5 33.5 L38.5 38.5 Z" fill="#e8323c"/><path d="M15 57 L33.5 33.5 L38.5 38.5 Z" fill="#f4f4f4"/></svg></div>
<div class="a" style="left:381px;top:1444px;width:72px;height:72px"><svg style="left:0px;top:0px" width="72" height="72" viewBox="0 0 72 72"><defs><linearGradient id="mg" x1="0" y1="0" x2="0" y2="1"><stop offset="0" stop-color="#6ceb62"/><stop offset="1" stop-color="#28c03a"/></linearGradient></defs><defs><linearGradient id="mw" x1="0" y1="0" x2="0" y2="1"><stop offset="0" stop-color="#f8fff6"/><stop offset="1" stop-color="#d8f2d4"/></linearGradient></defs><rect x="1" y="1" width="70" height="70" rx="16" fill="url(#mg)"/><ellipse cx="36" cy="33" rx="26" ry="21.5" fill="url(#mw)"/><path d="M19 47 Q21 55 14 60 Q26 58 29 52 Z" fill="#e2f5de"/></svg></div>
<div class="a" style="left:476px;top:1444px;width:72px;height:72px"><svg style="left:0px;top:0px" width="72" height="72" viewBox="0 0 72 72"><defs><linearGradient id="mlg" x1="0" y1="0" x2="0" y2="1"><stop offset="0" stop-color="#1b6ef6"/><stop offset="1" stop-color="#33c4fa"/></linearGradient></defs><rect x="1" y="1" width="70" height="70" rx="16" fill="url(#mlg)"/><rect x="10.5" y="19" width="51" height="33" rx="3" fill="#f3f3f3"/><path d="M11 20 L36 40 L61 20" fill="none" stroke="#b8b8b8" stroke-width="1.6"/><path d="M11 51 L29 35 M61 51 L43 35" stroke="#c8c8c8" stroke-width="1.2"/></svg></div>
<div class="a" style="left:571px;top:1444px;width:72px;height:72px"><svg style="left:0px;top:0px" width="72" height="72" viewBox="0 0 72 72"><clipPath id="mpc"><rect x="1" y="1" width="70" height="70" rx="16"/></clipPath><g clip-path="url(#mpc)"><rect x="0" y="0" width="72" height="72" fill="#f2efe6"/><circle cx="72" cy="0" r="56" fill="#8fd86a"/><circle cx="72" cy="0" r="44" fill="#f4f1e8"/><circle cx="72" cy="0" r="32" fill="#9fe07a"/><path d="M0 12 Q40 20 72 62" fill="none" stroke="#f6d233" stroke-width="9"/><rect x="0" y="0" width="10" height="72" fill="#f5c6d2"/><rect x="10" y="0" width="15" height="72" fill="#fbfbfb"/><rect x="25" y="0" width="2" height="72" fill="#dddddd"/><rect x="14" y="0" width="7" height="36" fill="#1a7ef0"/><circle cx="17.5" cy="42" r="10" fill="#fff"/><circle cx="17.5" cy="42" r="6.5" fill="#1a7ef0"/><path d="M44 52 H64 V60 Q54 68 44 60 Z" fill="#2b5fc8" stroke="#fff" stroke-width="1.5"/><rect x="44" y="50" width="20" height="4" fill="#d8323c"/><text x="54" y="61" font-size="8" font-weight="bold" fill="#fff" text-anchor="middle" font-family="Liberation Sans">280</text></g></svg></div>
<div class="a" style="left:666px;top:1444px;width:72px;height:72px"><svg style="left:0px;top:0px" width="72" height="72" viewBox="0 0 72 72"><rect x="1" y="1" width="70" height="70" rx="16" fill="#fbfbfb"/><ellipse cx="36" cy="20" rx="8.5" ry="14" transform="rotate(10 36 36)" fill="#f7a52a" opacity="0.82"/><ellipse cx="36" cy="20" rx="8.5" ry="14" transform="rotate(55 36 36)" fill="#f6de2e" opacity="0.82"/><ellipse cx="36" cy="20" rx="8.5" ry="14" transform="rotate(100 36 36)" fill="#9cd24a" opacity="0.82"/><ellipse cx="36" cy="20" rx="8.5" ry="14" transform="rotate(145 36 36)" fill="#4cc274" opacity="0.82"/><ellipse cx="36" cy="20" rx="8.5" ry="14" transform="rotate(190 36 36)" fill="#3fa8e8" opacity="0.82"/><ellipse cx="36" cy="20" rx="8.5" ry="14" transform="rotate(235 36 36)" fill="#7a72dc" opacity="0.82"/><ellipse cx="36" cy="20" rx="8.5" ry="14" transform="rotate(280 36 36)" fill="#b65ed0" opacity="0.82"/><ellipse cx="36" cy="20" rx="8.5" ry="14" transform="rotate(325 36 36)" fill="#f04848" opacity="0.82"/></svg></div>
<div class="a" style="left:761px;top:1444px;width:72px;height:72px"><svg style="left:0px;top:0px" width="72" height="72" viewBox="0 0 72 72"><defs><linearGradient id="ftg" x1="0" y1="0" x2="0" y2="1"><stop offset="0" stop-color="#6ceb62"/><stop offset="1" stop-color="#28c03a"/></linearGradient></defs><rect x="1" y="1" width="70" height="70" rx="16" fill="url(#ftg)"/><rect x="11" y="23" width="33" height="27" rx="6" fill="#eef6ec"/><path d="M46 33 L60 24.5 V48.5 L46 40 Z" fill="#eef6ec"/></svg></div>
<div class="a" style="left:856px;top:1444px;width:72px;height:72px"><svg style="left:0px;top:0px" width="72" height="72" viewBox="0 0 72 72"><rect x="1" y="1" width="70" height="70" rx="16" fill="#fafafa"/><path d="M1 17 V21 H71 V17 A16 16 0 0 0 55 1 H17 A16 16 0 0 0 1 17Z" fill="#f04c4c"/><text x="36" y="16" font-size="12.5" font-weight="bold" fill="#fff" text-anchor="middle" font-family="Liberation Sans">JAN</text><text x="36" y="62" font-size="40" fill="#222" text-anchor="middle" font-family="Liberation Sans">1</text></svg></div>
<div class="a" style="left:951px;top:1444px;width:72px;height:72px"><svg style="left:0px;top:0px" width="72" height="72" viewBox="0 0 72 72"><defs><linearGradient id="ctg" x1="0" y1="0" x2="0" y2="1"><stop offset="0" stop-color="#b88e52"/><stop offset="1" stop-color="#a57c45"/></linearGradient></defs><rect x="1" y="1" width="66" height="70" rx="14" fill="url(#ctg)"/><rect x="66" y="24" width="5" height="9" fill="#6fb4e6"/><rect x="66" y="36" width="5" height="9" fill="#f09a30"/><rect x="66" y="48" width="5" height="9" fill="#8bc34a"/><circle cx="34" cy="35" r="22" fill="none" stroke="#8e6a36" stroke-width="2"/><circle cx="34" cy="28" r="7.5" fill="#8e6a36"/><path d="M19 50 Q22 38 34 38 Q46 38 49 50 Q42 57 34 57 Q26 57 19 50Z" fill="#8e6a36"/></svg></div>
<div class="a" style="left:1046px;top:1444px;width:72px;height:72px"><svg style="left:0px;top:0px" width="72" height="72" viewBox="0 0 72 72"><rect x="1" y="1" width="70" height="70" rx="16" fill="#fcfcfc"/><circle cx="13" cy="18" r="4.5" fill="none" stroke="#2a78e4" stroke-width="2.4"/><circle cx="13" cy="18" r="2" fill="#2a78e4"/><circle cx="13" cy="36" r="4.5" fill="none" stroke="#e23a3a" stroke-width="2.4"/><circle cx="13" cy="36" r="2" fill="#e23a3a"/><circle cx="13" cy="54" r="4.5" fill="none" stroke="#f2a023" stroke-width="2.4"/><circle cx="13" cy="54" r="2" fill="#f2a023"/><path d="M27 18 H62 M27 36 H62 M27 54 H62" stroke="#c8c8c8" stroke-width="1.4"/></svg></div>
<div class="a" style="left:1141px;top:1444px;width:72px;height:72px"><svg style="left:0px;top:0px" width="72" height="72" viewBox="0 0 72 72"><defs><linearGradient id="ntg" x1="0" y1="0" x2="0" y2="1"><stop offset="0" stop-color="#fbd847"/><stop offset="1" stop-color="#f4c21e"/></linearGradient></defs><clipPath id="ntc"><rect x="1" y="1" width="70" height="70" rx="16"/></clipPath><g clip-path="url(#ntc)"><rect x="0" y="0" width="72" height="72" fill="#f4f3ef"/><rect x="0" y="0" width="72" height="18" fill="url(#ntg)"/><path d="M0 20 H72" stroke="#ddd" stroke-width="1.5" stroke-dasharray="1.5 1.5"/><path d="M4 33 H68 M4 45 H68 M4 57 H68" stroke="#dcdcdc" stroke-width="1"/></g></svg></div>
<div class="a" style="left:1236px;top:1444px;width:72px;height:72px"><svg style="left:0px;top:0px" width="72" height="72" viewBox="0 0 72 72"><rect x="1" y="1" width="70" height="70" rx="16" fill="#1d2120"/><g transform="translate(9,22) scale(1.05)"><path d="M12.152 6.896c-.948 0-2.415-1.078-3.96-1.04-2.04.027-3.91 1.183-4.961 3.014-2.117 3.675-.546 9.103 1.519 12.09 1.013 1.454 2.208 3.09 3.792 3.039 1.52-.065 2.09-.987 3.935-.987 1.831 0 2.35.987 3.96.948 1.637-.026 2.676-1.48 3.676-2.948 1.156-1.688 1.636-3.325 1.662-3.415-.039-.013-3.182-1.221-3.22-4.857-.026-3.04 2.48-4.494 2.597-4.559-1.429-2.09-3.623-2.324-4.39-2.376-2-.156-3.675 1.09-4.61 1.09zM15.53 3.83c.843-1.012 1.4-2.427 1.245-3.83-1.207.052-2.662.805-3.532 1.818-.78.896-1.454 2.338-1.273 3.714 1.338.104 2.715-.688 3.559-1.701" fill="#fff"/></g><text x="48" y="47" font-size="27" font-weight="bold" fill="#fff" text-anchor="middle" font-family="Liberation Sans">tv</text></svg></div>
<div class="a" style="left:1331px;top:1444px;width:72px;height:72px"><svg style="left:0px;top:0px" width="72" height="72" viewBox="0 0 72 72"><defs><linearGradient id="msg" x1="0" y1="0" x2="0" y2="1"><stop offset="0" stop-color="#fb5c74"/><stop offset="1" stop-color="#f03a4e"/></linearGradient></defs><rect x="1" y="1" width="70" height="70" rx="16" fill="url(#msg)"/><path d="M27 50 V19 L53 13 V44" fill="none" stroke="#fff" stroke-width="4.5" stroke-linejoin="round"/><ellipse cx="22" cy="51" rx="7.5" ry="6.5" fill="#fff"/><ellipse cx="48" cy="45" rx="7.5" ry="6.5" fill="#fff"/></svg></div>
<div class="a" style="left:1426px;top:1444px;width:72px;height:72px"><svg style="left:0px;top:0px" width="72" height="72" viewBox="0 0 72 72"><defs><linearGradient id="pdg" x1="0" y1="0" x2="0" y2="1"><stop offset="0" stop-color="#d26cf5"/><stop offset="1" stop-color="#8a2bd6"/></linearGradient></defs><rect x="1" y="1" width="70" height="70" rx="16" fill="url(#pdg)"/><path d="M22 48 A19 19 0 1 1 50 48" fill="none" stroke="#f4e6fc" stroke-width="3.2" stroke-linecap="round"/><path d="M28 42 A11 11 0 1 1 44 42" fill="none" stroke="#f4e6fc" stroke-width="3.2" stroke-linecap="round"/><circle cx="36" cy="32" r="5.5" fill="#fff"/><rect x="32.2" y="40" width="7.6" height="21" rx="3.8" fill="#fff"/></svg></div>
<div class="a" style="left:1521px;top:1444px;width:72px;height:72px"><svg style="left:0px;top:0px" width="72" height="72" viewBox="0 0 72 72"><rect x="1" y="1" width="70" height="70" rx="16" fill="#fdfdfd"/><path d="M15 17 Q15 15 17 15 H25 L56 46 V55 Q56 57 54 57 H46 L15 26 Z" fill="#f3385a"/><path d="M38 15 H54 Q56 15 56 17 V33 Z" fill="#f3385a"/><path d="M15 39 L33 57 H17 Q15 57 15 55 Z" fill="#f3385a"/></svg></div>
<div class="a" style="left:1616px;top:1444px;width:72px;height:72px"><svg style="left:0px;top:0px" width="72" height="72" viewBox="0 0 72 72"><defs><linearGradient id="asg" x1="0" y1="0" x2="0" y2="1"><stop offset="0" stop-color="#1eb2f8"/><stop offset="1" stop-color="#1a64ec"/></linearGradient></defs><rect x="1" y="1" width="70" height="70" rx="16" fill="url(#asg)"/><path d="M41 14 L22 54 M31 14 L50 54 M14 43 H58" fill="none" stroke="#fff" stroke-width="4.6" stroke-linecap="round"/></svg></div>
<div class="a" style="left:1711px;top:1444px;width:72px;height:72px"><svg style="left:0px;top:0px" width="72" height="72" viewBox="0 0 72 72"><rect x="1" y="1" width="70" height="70" rx="15" fill="#0d0d0d" stroke="#cfcfcf" stroke-width="1.5"/><rect x="6" y="6" width="60" height="60" rx="10" fill="#262626"/><text x="11" y="26" font-size="17" font-weight="bold" fill="#fff" font-family="Liberation Mono">&gt;_</text></svg></div>
<div class="a" style="left:1806px;top:1444px;width:72px;height:72px"><svg style="left:0px;top:0px" width="72" height="72" viewBox="0 0 72 72"><defs><linearGradient id="spg" x1="0" y1="0" x2="0" y2="1"><stop offset="0" stop-color="#e0e3e6"/><stop offset="1" stop-color="#8e9093"/></linearGradient></defs><rect x="1" y="1" width="70" height="70" rx="16" fill="url(#spg)"/><circle cx="36" cy="36" r="30" fill="#2e2e2e"/><path d="M62.00 36.00 L66.50 36.00" stroke="#9a9a9a" stroke-width="1.3"/><path d="M61.78 39.39 L66.24 39.98" stroke="#9a9a9a" stroke-width="1.3"/><path d="M61.11 42.73 L65.46 43.89" stroke="#9a9a9a" stroke-width="1.3"/><path d="M60.02 45.95 L64.18 47.67" stroke="#9a9a9a" stroke-width="1.3"/><path d="M58.52 49.00 L62.41 51.25" stroke="#9a9a9a" stroke-width="1.3"/><path d="M56.63 51.83 L60.20 54.57" stroke="#9a9a9a" stroke-width="1.3"/><path d="M54.38 54.38 L57.57 57.57" stroke="#9a9a9a" stroke-width="1.3"/><path d="M51.83 56.63 L54.57 60.20" stroke="#9a9a9a" stroke-width="1.3"/><path d="M49.00 58.52 L51.25 62.41" stroke="#9a9a9a" stroke-width="1.3"/><path d="M45.95 60.02 L47.67 64.18" stroke="#9a9a9a" stroke-width="1.3"/><path d="M42.73 61.11 L43.89 65.46" stroke="#9a9a9a" stroke-width="1.3"/><path d="M39.39 61.78 L39.98 66.24" stroke="#9a9a9a" stroke-width="1.3"/><path d="M36.00 62.00 L36.00 66.50" stroke="#9a9a9a" stroke-width="1.3"/><path d="M32.61 61.78 L32.02 66.24" stroke="#9a9a9a" stroke-width="1.3"/><path d="M29.27 61.11 L28.11 65.46" stroke="#9a9a9a" stroke-width="1.3"/><path d="M26.05 60.02 L24.33 64.18" stroke="#9a9a9a" stroke-width="1.3"/><path d="M23.00 58.52 L20.75 62.41" stroke="#9a9a9a" stroke-width="1.3"/><path d="M20.17 56.63 L17.43 60.20" stroke="#9a9a9a" stroke-width="1.3"/><path d="M17.62 54.38 L14.43 57.57" stroke="#9a9a9a" stroke-width="1.3"/><path d="M15.37 51.83 L11.80 54.57" stroke="#9a9a9a" stroke-width="1.3"/><path d="M13.48 49.00 L9.59 51.25" stroke="#9a9a9a" stroke-width="1.3"/><path d="M11.98 45.95 L7.82 47.67" stroke="#9a9a9a" stroke-width="1.3"/><path d="M10.89 42.73 L6.54 43.89" stroke="#9a9a9a" stroke-width="1.3"/><path d="M10.22 39.39 L5.76 39.98" stroke="#9a9a9a" stroke-width="1.3"/><path d="M10.00 36.00 L5.50 36.00" stroke="#9a9a9a" stroke-width="1.3"/><path d="M10.22 32.61 L5.76 32.02" stroke="#9a9a9a" stroke-width="1.3"/><path d="M10.89 29.27 L6.54 28.11" stroke="#9a9a9a" stroke-width="1.3"/><path d="M11.98 26.05 L7.82 24.33" stroke="#9a9a9a" stroke-width="1.3"/><path d="M13.48 23.00 L9.59 20.75" stroke="#9a9a9a" stroke-width="1.3"/><path d="M15.37 20.17 L11.80 17.43" stroke="#9a9a9a" stroke-width="1.3"/><path d="M17.62 17.62 L14.43 14.43" stroke="#9a9a9a" stroke-width="1.3"/><path d="M20.17 15.37 L17.43 11.80" stroke="#9a9a9a" stroke-width="1.3"/><path d="M23.00 13.48 L20.75 9.59" stroke="#9a9a9a" stroke-width="1.3"/><path d="M26.05 11.98 L24.33 7.82" stroke="#9a9a9a" stroke-width="1.3"/><path d="M29.27 10.89 L28.11 6.54" stroke="#9a9a9a" stroke-width="1.3"/><path d="M32.61 10.22 L32.02 5.76" stroke="#9a9a9a" stroke-width="1.3"/><path d="M36.00 10.00 L36.00 5.50" stroke="#9a9a9a" stroke-width="1.3"/><path d="M39.39 10.22 L39.98 5.76" stroke="#9a9a9a" stroke-width="1.3"/><path d="M42.73 10.89 L43.89 6.54" stroke="#9a9a9a" stroke-width="1.3"/><path d="M45.95 11.98 L47.67 7.82" stroke="#9a9a9a" stroke-width="1.3"/><path d="M49.00 13.48 L51.25 9.59" stroke="#9a9a9a" stroke-width="1.3"/><path d="M51.83 15.37 L54.57 11.80" stroke="#9a9a9a" stroke-width="1.3"/><path d="M54.38 17.62 L57.57 14.43" stroke="#9a9a9a" stroke-width="1.3"/><path d="M56.63 20.17 L60.20 17.43" stroke="#9a9a9a" stroke-width="1.3"/><path d="M58.52 23.00 L62.41 20.75" stroke="#9a9a9a" stroke-width="1.3"/><path d="M60.02 26.05 L64.18 24.33" stroke="#9a9a9a" stroke-width="1.3"/><path d="M61.11 29.27 L65.46 28.11" stroke="#9a9a9a" stroke-width="1.3"/><path d="M61.78 32.61 L66.24 32.02" stroke="#9a9a9a" stroke-width="1.3"/><circle cx="36" cy="36" r="25" fill="#7c7c7c"/><circle cx="36" cy="36" r="19" fill="#5a5a5a"/><circle cx="36" cy="36" r="15" fill="#8a8a8a"/><path d="M36 36 V13 M36 36 L55.9 47.5 M36 36 L16.1 47.5" stroke="#474747" stroke-width="4"/><circle cx="36" cy="36" r="4" fill="#474747"/></svg></div>
<div class="a" style="left:1901px;top:1444px;width:72px;height:72px"><svg style="left:-5px;top:-5px" width="82" height="82" viewBox="0 0 82 82"><clipPath id="mtc"><circle cx="41" cy="41" r="36"/></clipPath><circle cx="41" cy="41" r="40" fill="#fafafa"/><circle cx="41" cy="41" r="36" fill="#3f9de6"/><rect x="0" y="57" width="82" height="30" fill="#4b8fd8" clip-path="url(#mtc)"/><path d="M5 56.5 H77" stroke="#fff" stroke-width="4.5" clip-path="url(#mtc)"/><path d="M12 54 L26 28.5 L34 43 M29 54 L46 16 L63 54" fill="none" stroke="#fff" stroke-width="4.2" stroke-linejoin="miter"/></svg></div>
<div class="a" style="left:1996px;top:1444px;width:72px;height:72px"><svg style="left:-1px;top:-1px" width="74" height="74" viewBox="0 0 74 74"><circle cx="37" cy="37" r="37" fill="#b8bec6"/><circle cx="37" cy="37" r="34" fill="#e2e6ea"/><clipPath id="wcl"><rect x="0" y="0" width="37" height="74"/></clipPath><circle cx="37" cy="37" r="31" fill="#f2f6fa"/><g clip-path="url(#wcl)"><circle cx="37" cy="37" r="31" fill="#2a55c8"/><path d="M12 22 Q20 12 34 14 L36 60 Q26 58 22 50 Q14 40 18 30Z" fill="#5f9848"/><path d="M20 24 Q28 20 34 26" stroke="#e8eef4" stroke-width="3" fill="none"/></g><text x="46" y="21" font-size="8" fill="#c04040" font-family="Liberation Sans">1</text><text x="53" y="29" font-size="8" fill="#223" font-family="Liberation Sans">2</text><text x="57" y="41" font-size="9" fill="#223" font-family="Liberation Sans">3</text><text x="53" y="53" font-size="8" fill="#223" font-family="Liberation Sans">4</text><text x="45" y="61" font-size="8" fill="#223" font-family="Liberation Sans">5</text><path d="M37 37 L51 25 M37 37 L47 51" stroke="#111" stroke-width="3.5" stroke-linecap="round"/><path d="M37 37 L55 26" stroke="#d05050" stroke-width="1"/><circle cx="37" cy="37" r="2.5" fill="#c04010"/></svg></div>
<div class="a" style="left:2102px;top:1441px;width:2px;height:87px;background:#8c8c8c"></div>
<div class="a" style="left:2134px;top:1444px;width:72px;height:72px"><svg style="left:-5px;top:0px" width="82" height="72" viewBox="0 0 82 72"><path d="M2 14 Q2 8 7 8 H26 Q30 8 32 11 L34 13 H76 Q80 13 80 17 V64 Q80 69 75 69 H7 Q2 69 2 64 Z" fill="#3a9ee2"/><path d="M2 20 Q2 17 5 17 H77 Q80 17 80 20 V64 Q80 69 75 69 H7 Q2 69 2 64 Z" fill="#77c8f9"/><circle cx="41" cy="42" r="12" fill="#49a6e6"/><path d="M41 34.5 V48.5 M35.5 43.5 L41 49 L46.5 43.5" fill="none" stroke="#dff1ff" stroke-width="2.2"/></svg></div>
<div class="a" style="left:2228px;top:1444px;width:72px;height:72px"><svg style="left:2px;top:-3px" width="64" height="80" viewBox="0 0 64 80"><defs><linearGradient id="trg" x1="0" x2="1" y1="0" y2="0"><stop offset="0" stop-color="#d6d8dc"/><stop offset="0.5" stop-color="#e8eaee"/><stop offset="1" stop-color="#d2d4d8"/></linearGradient></defs><path d="M1 6 H63 L57 70 Q56 78 48 78 H16 Q8 78 7 70 Z" fill="url(#trg)"/><ellipse cx="32" cy="7" rx="31" ry="6" fill="#eff0f2" stroke="#c8cacd" stroke-width="1"/><ellipse cx="32" cy="8" rx="27" ry="4" fill="#e4e5e8"/></svg></div>
<div class="a" style="left:128px;top:1532px;width:8px;height:8px;border-radius:50%;background:#3d3d3d"></div>
<div class="a" style="left:2028px;top:1532px;width:8px;height:8px;border-radius:50%;background:#3d3d3d"></div>
</body></html>
